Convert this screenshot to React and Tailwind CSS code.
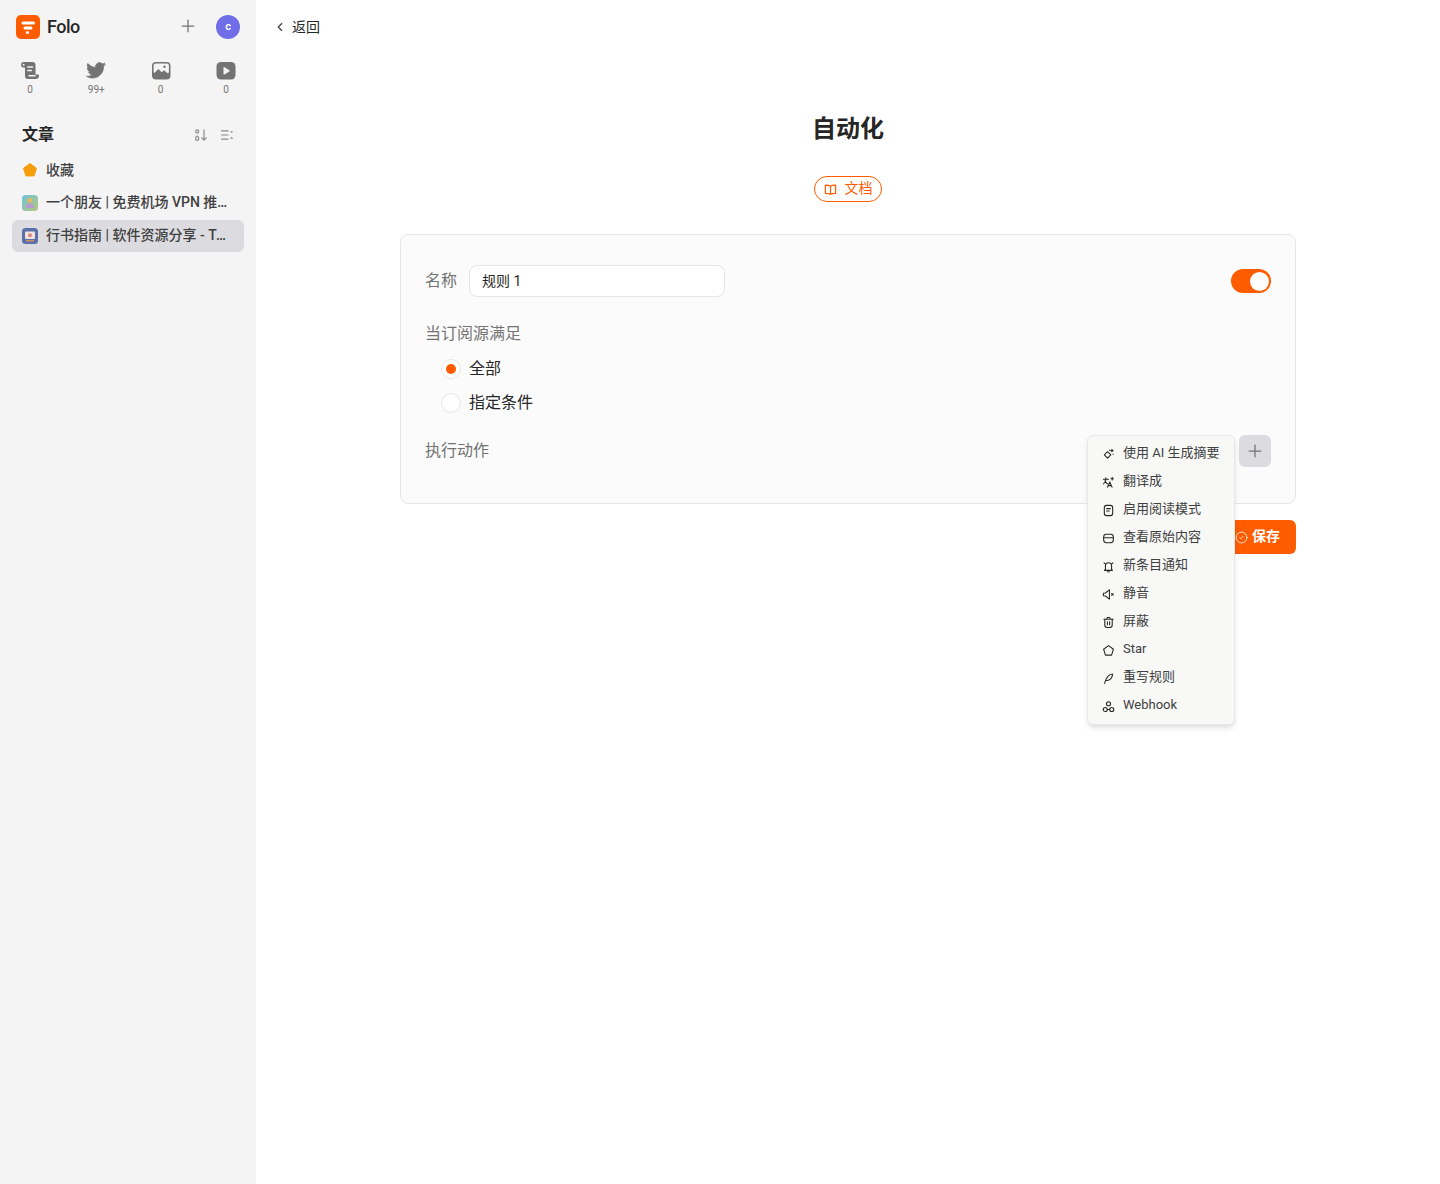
import React from "react";
import { Plus, ChevronLeft, CircleCheck } from "lucide-react";

function FoloLogo() {
  return (
    <svg width="24" height="24" viewBox="0 0 24 24">
      <rect width="24" height="24" rx="5" fill="#ff5c00" />
      <rect x="5.5" y="6.500" width="13.500" height="3" rx="1.500" fill="#fff" />
      <rect x="7.500" y="11.500" width="9" height="3" rx="1.500" fill="#fff" />
      <circle cx="11.500" cy="17.500" r="1.600" fill="#fff" />
    </svg>
  );
}

function ScrollIcon() {
  return (
    <svg width="20" height="20" viewBox="0 0 20 20">
      <path d="M3.500 1h9a3 3 0 0 1 3 3v9.500H18c.6 0 1 .4 1 1 0 2-1.200 3.500-3 3.500H8a3 3 0 0 1-3-3V6.500H3.200C1.800 6.500 1 5.300 1 3.800 1 2.200 2 1 3.500 1z" fill="#737373" />
      <path d="M7.800 6h4.700M7.800 9.500h3.500M9 14.700h6" stroke="#f4f4f4" strokeWidth="1.600" strokeLinecap="round" fill="none" />
      <circle cx="3.600" cy="3.800" r="1" fill="#f4f4f4" />
    </svg>
  );
}
function BirdIcon() {
  return (
    <svg width="20" height="20" viewBox="0 0 24 24">
      <path d="M23 4.300c-.8.400-1.700.600-2.600.700.900-.6 1.600-1.400 2-2.500-.9.500-1.800.900-2.900 1.100a4.600 4.600 0 0 0-7.900 4.200C7.800 7.600 4.400 5.800 2.200 3c-1.200 2.100-.6 4.800 1.400 6.100-.7 0-1.400-.2-2-.6 0 2.200 1.500 4.100 3.700 4.600-.7.200-1.400.2-2.100.1.600 1.800 2.300 3.100 4.300 3.200-1.900 1.500-4.300 2.200-6.800 1.900 2.100 1.300 4.500 2.100 7.100 2.100 8.600 0 13.500-7.300 13.200-13.800.9-.6 1.700-1.400 2-2.300z" fill="#737373" stroke="#737373" strokeWidth="1" strokeLinejoin="round" />
    </svg>
  );
}
function PictureIcon() {
  return (
    <svg width="20" height="20" viewBox="0 0 20 20">
      <rect x="1" y="1" width="18.500" height="17.500" rx="4" fill="#737373" />
      <rect x="2.600" y="2.600" width="15.300" height="10" rx="2.200" fill="#f4f4f4" />
      <path d="M2.500 13l4.800-5 3.400 3.300 2.300-2 5 4.200v1.500h-15.500z" fill="#737373" />
      <circle cx="13.500" cy="5.800" r="1.200" fill="#737373" />
    </svg>
  );
}
function VideoIcon() {
  return (
    <svg width="20" height="20" viewBox="0 0 20 20">
      <rect x="0.500" y="1" width="19" height="17.500" rx="4.500" fill="#737373" />
      <path d="M7.500 6.500v6.500c0 .5.500.8 1 .5l4.800-3c.5-.3.500-.9 0-1.200l-4.800-3.100c-.5-.3-1 0-1 .3z" fill="#f4f4f4" />
    </svg>
  );
}

function SortIcon() {
  return (
    <svg width="14" height="14" viewBox="0 0 14 14" fill="none" stroke="#8a8a8a" strokeWidth="1.200" strokeLinecap="round" strokeLinejoin="round">
      <circle cx="3.200" cy="3.400" r="1.500" />
      <path d="M3.200 7v-0" />
      <rect x="1.700" y="8.500" width="3" height="3.800" rx="1.400" />
      <path d="M10 1.800v10.200M7.800 9.800l2.200 2.300 2.200-2.300" />
    </svg>
  );
}
function ListSortIcon() {
  return (
    <svg width="14" height="14" viewBox="0 0 14 14" fill="none">
      <path d="M1.500 2.800h6.500M1.500 7h6.500M1.500 11.200h6.500" stroke="#8a8a8a" strokeWidth="1.200" strokeLinecap="round" />
      <path d="M10 3.200h3.200l-1.600 1.900zM10 10.700h3.200l-1.600-1.900z" fill="#8a8a8a" />
    </svg>
  );
}

function Tab({ icon, count }) {
  return (
    <div className="flex flex-col items-center w-[32px]">
      <div className="h-[20px] flex items-center justify-center">{icon}</div>
      <div className="mt-[2px] text-[10px] leading-[14px] text-[#737373]">{count}</div>
    </div>
  );
}

function Avatar1() {
  return (
    <svg width="16" height="16" viewBox="0 0 16 16" className="shrink-0">
      <defs>
        <linearGradient id="av1" x1="0" y1="0" x2="1" y2="1">
          <stop offset="0" stopColor="#6fc4d8" />
          <stop offset="1" stopColor="#b8c480" />
        </linearGradient>
      </defs>
      <rect width="16" height="16" rx="3.500" fill="url(#av1)" />
      <circle cx="8" cy="5.500" r="2.400" fill="#e8b860" />
      <path d="M3.500 13c.5-3 2.500-4.500 4.500-4.500s4 1.500 4.500 4.500z" fill="#b89ad0" />
    </svg>
  );
}
function Avatar2() {
  return (
    <svg width="16" height="16" viewBox="0 0 16 16" className="shrink-0">
      <rect width="16" height="16" rx="3.500" fill="#5a70a8" />
      <rect x="3" y="3.500" width="10" height="7.500" rx="1" fill="#f0e2dc" />
      <circle cx="8" cy="7.200" r="2" fill="#d88a80" />
      <rect x="4" y="12" width="8" height="1.500" fill="#c89060" />
    </svg>
  );
}

function SideRow({ icon, text, active, lift }) {
  return (
    <div className={`h-[32px] flex items-center gap-2 pl-[10px] pr-[14px] mx-3 rounded-md ${active ? "bg-[#dcdce0]" : ""}`}>
      {icon}
      <span className={`truncate text-[14px] leading-5 font-medium text-[#404040] ${lift ? "relative -top-px" : ""}`}>{text}</span>
    </div>
  );
}

const P = { fill: "none", stroke: "currentColor", strokeWidth: 1.150, strokeLinecap: "round", strokeLinejoin: "round" };
const I = ({ children }) => (
  <svg width="13" height="13" viewBox="0 0 14 14" className="shrink-0 text-[#262626]" {...P}>{children}</svg>
);

const actions = [
  [<I><path d="M6 4l3.500 3.500-3.500 3.500-3.500-3.500z" /><path d="M10.700 1.500v2.600M9.400 2.800H12M12 6.500v.2M8 2.200v.2" /></I>, "使用 AI 生成摘要"],
  [<I><path d="M1.500 3.500h5.500M4.200 2v1.500c0 2.500-1 4-2.700 5M3 5.500c.7 1.400 1.800 2.500 3.200 3" /><path d="M6 12l2.400-5.500L10.800 12M6.900 10.400h3" /><path d="M11 1.500v2.800M9.600 2.900h2.800" /></I>, "翻译成"],
  [<I><rect x="2.500" y="1.500" width="9" height="11" rx="2.500" /><path d="M5 5h4M5 7.500h2.800" /></I>, "启用阅读模式"],
  [<I><rect x="1.800" y="2.500" width="10.400" height="9" rx="2.800" /><path d="M1.800 6.200h10.400" /></I>, "查看原始内容"],
  [<I><path d="M3.700 10V6.200a3.300 3.300 0 0 1 6.600 0V10l1 1.200H2.700z" /><path d="M2.200 3l1.300 1.200M11.800 3l-1.300 1.200M6 12.600h2" /></I>, "新条目通知"],
  [<I><path d="M1.500 5.600v2.800l2.200.2L8 12V2L3.700 5.400z" /><path d="M10.300 6l1.800 1.800M12.100 6l-1.800 1.800" /></I>, "静音"],
  [<I><path d="M2 3.500h10M5 3.500l.6-1.800h2.800l.6 1.800" /><path d="M3 3.500v6.300a2.500 2.500 0 0 0 2.500 2.500h3a2.500 2.500 0 0 0 2.500-2.500V3.500" /><path d="M5.800 6.300v3M8.200 6.300v3" /></I>, "屏蔽"],
  [<I><path d="M7 1.700l5.300 3.900-2 6.400H3.700l-2-6.400z" /></I>, "Star"],
  [<I><path d="M2.800 12.300c.6-3 1.800-5.800 3.600-7.700 1.500-1.500 3.300-2.300 5-2.400 0 2-.6 3.800-2 5.200-1.400 1.400-3.100 2-4.800 1.700" /></I>, "重写规则"],
  [<I><circle cx="7" cy="4" r="2.200" /><circle cx="3.500" cy="10.200" r="2.200" /><circle cx="10.500" cy="10.200" r="2.200" /><path d="M5.700 10.200h2.600" /></I>, "Webhook"],
];

function Radio({ on, label }) {
  return (
    <div className="h-[33px] flex items-center gap-2">
      <div className="w-[20px] h-[20px] rounded-full border border-[#e5e5e5] bg-white flex items-center justify-center">
        {on && <div className="w-[10px] h-[10px] rounded-full bg-[#ff5c00]" />}
      </div>
      <span className="text-[16px] leading-6 text-[#262626]">{label}</span>
    </div>
  );
}

export default function App() {
  return (
    <div
      className="relative flex h-[1184px] w-full overflow-hidden bg-white text-[#262626]"
      style={{ fontFamily: '"Roboto", "Noto Sans CJK SC", sans-serif' }}
    >
      <aside className="w-[256px] shrink-0 bg-[#f4f4f4] flex flex-col">
        <div className="flex items-center h-[24px] mt-[15px] pl-4 pr-4">
          <FoloLogo />
          <span className="ml-[7px] text-[18px] leading-6 font-medium text-[#262626] tracking-[-0.5px]">Folo</span>
          <div className="ml-auto flex items-center">
            <Plus size={20} strokeWidth={1.500} className="text-[#737373] relative -top-px" />
            <div className="w-6 h-6 ml-[18px] rounded-full bg-[#6f6de8] text-white flex items-center justify-center text-[11px] font-semibold">c</div>
          </div>
        </div>
        <div className="flex justify-between mt-[22px] pl-[14px] pr-[14px]">
          <Tab icon={<ScrollIcon />} count="0" />
          <div className="relative left-[1px]"><Tab icon={<BirdIcon />} count="99+" /></div>
          <Tab icon={<PictureIcon />} count="0" />
          <Tab icon={<VideoIcon />} count="0" />
        </div>
        <div className="flex items-center h-[24px] mt-[26px] pl-[22px] pr-[22px]">
          <span className="text-[16px] leading-6 font-bold text-[#262626]">文章</span>
          <div className="ml-auto flex items-center gap-[12px]">
            <SortIcon />
            <ListSortIcon />
          </div>
        </div>
        <div className="mt-[7px] flex flex-col gap-[1px]">
          <SideRow
            icon={<svg width="16" height="16" viewBox="0 0 16 16" className="shrink-0"><path d="M8 1.500l6.500 4.800-2.500 7.600H4L1.500 6.300z" fill="#f59e0b" stroke="#f59e0b" strokeLinejoin="round" /></svg>}
            text="收藏"
          />
          <SideRow lift icon={<Avatar1 />} text="一个朋友 | 免费机场 VPN 推荐与测评分享" />
          <SideRow lift active icon={<Avatar2 />} text="行书指南 | 软件资源分享 - Telegram" />
        </div>
      </aside>

      <main className="flex-1 min-w-0 flex flex-col">
        <div className="h-[24px] mt-[15px] ml-[17px] flex items-center gap-[5px]">
          <ChevronLeft size={14} strokeWidth={2} className="text-[#404040]" />
          <span className="text-[14px] leading-5 text-[#262626]">返回</span>
        </div>
        <div className="w-[896px] mx-auto flex flex-col items-center">
          <h1 className="mt-[74px] text-[24px] leading-8 font-bold text-[#262626]">自动化</h1>
          <div className="mt-[31px] h-[26px] w-[68px] rounded-full border border-[#ff5c00] text-[#ff5c00] flex items-center justify-center gap-[8px] text-[14px]">
            <svg width="13" height="13" viewBox="0 0 14 14" fill="none" stroke="currentColor" strokeWidth="1.300" strokeLinejoin="round">
              <path d="M7 3.500C6 2.600 4.500 2.300 1.500 2.300v8.800c3 0 4.500.3 5.500 1.200 1-.9 2.500-1.200 5.500-1.200V2.300c-3 0-4.500.3-5.500 1.200zM7 3.500v8.800" />
            </svg>
            <span className="relative -top-px">文档</span>
          </div>
          <div className="mt-[32px] w-full h-[270px] rounded-lg border border-[#e5e5e5] bg-[#fbfbfb] pt-[30px] pl-[24px] pr-[24px]">
            <div className="flex items-center h-[32px]">
              <span className="text-[16px] leading-6 text-[#737373]">名称</span>
              <div className="ml-[12px] w-[256px] h-[32px] rounded-lg border border-[#e5e5e5] bg-white flex items-center px-3 text-[14px] text-[#262626]">规则 1</div>
              <div className="ml-auto w-[40px] h-[24px] rounded-full bg-[#ff5c00] flex items-center justify-end pr-[2px]">
                <div className="w-[19px] h-[19px] rounded-full bg-white" />
              </div>
            </div>
            <div className="mt-[25px] text-[16px] leading-6 text-[#737373]">当订阅源满足</div>
            <div className="mt-[6px] pl-[16px] flex flex-col gap-[1px]">
              <Radio on label="全部" />
              <Radio label="指定条件" />
            </div>
            <div className="mt-[16px] flex items-center h-[32px]">
              <span className="text-[16px] leading-6 text-[#737373]">执行动作</span>
              <div className="ml-auto w-[32px] h-[32px] rounded-md bg-[#dcdce0] flex items-center justify-center">
                <Plus size={20} strokeWidth={1.500} className="text-[#737373]" />
              </div>
            </div>
          </div>
          <div className="mt-[16px] self-end h-[34px] w-[90px] rounded-md bg-[#ff5c00] text-white flex items-center justify-end pr-[16px] gap-[4px] text-[14px] font-bold">
            <CircleCheck size={13} strokeWidth={1.500} />
            <span className="relative -top-px">保存</span>
          </div>
        </div>
      </main>

      <div className="absolute left-[1087px] top-[435px] w-[148px] h-[290px] rounded-md border border-[#e8e8e8] bg-[#f8f8f7] shadow-md pt-[4px] pl-[13px]">
        {actions.map(([icon, label]) => (
          <div key={label} className="h-[28px] flex items-center gap-[8px] whitespace-nowrap text-[13px] text-[#404040]">
            <span className="w-[14px] flex justify-center shrink-0">{icon}</span>
            <span className="relative -top-px">{label}</span>
          </div>
        ))}
      </div>
    </div>
  );
}
